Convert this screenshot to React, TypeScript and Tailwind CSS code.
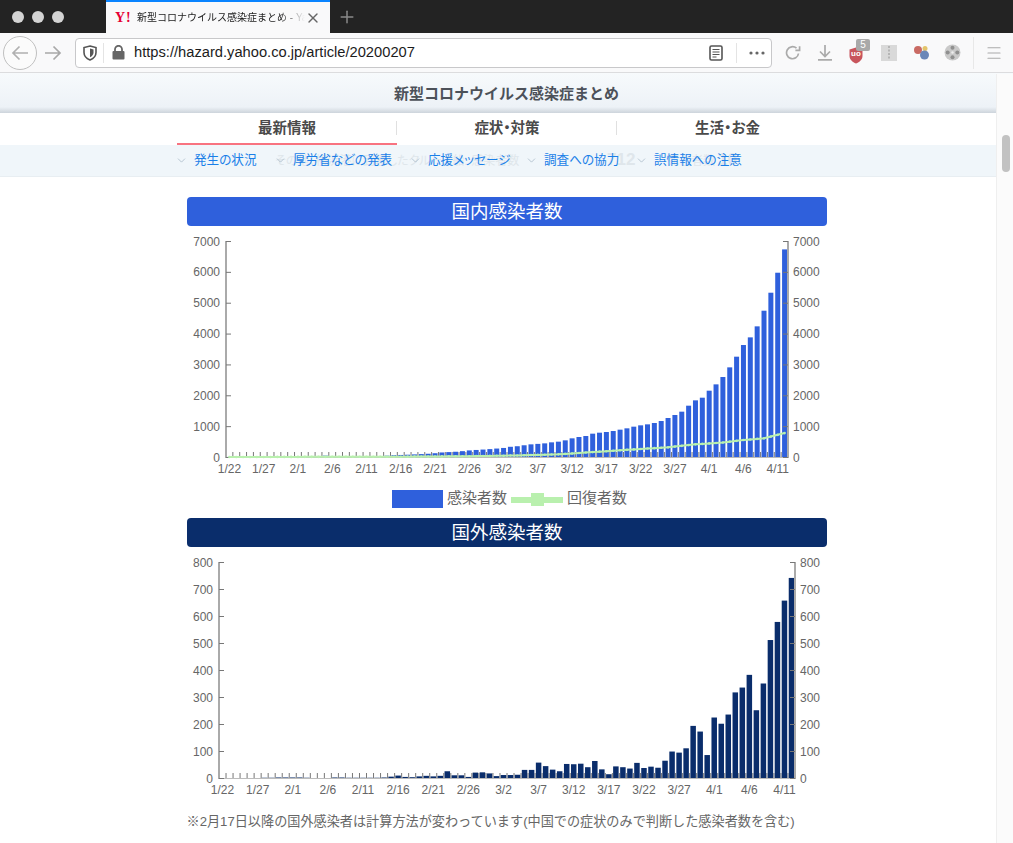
import { ChevronDown, Menu, Plus, X } from 'lucide-react';

const DOMESTIC = [
  2, 2, 2, 4, 4, 7, 7, 11, 15, 20, 20, 20, 22, 22, 45, 25, 25, 26, 26, 26, 28, 28, 29, 43, 59, 66, 74, 84, 94, 105,
  122, 147, 159, 170, 189, 214, 228, 241, 256, 274, 293, 331, 349, 380, 410, 425, 442, 475, 497, 540, 605, 648, 680,
  756, 788, 810, 842, 886, 929, 983, 1026, 1058, 1102, 1166, 1264, 1361, 1469, 1663, 1836, 1922, 2149, 2354, 2592,
  2905, 3251, 3629, 3877, 4234, 4741, 5324, 5972, 6728,
];

const OVERSEAS = [
  0, 0, 0, 0, 0, 0, 1, 1, 2, 2, 2, 2, 1, 0, 0, 0, 2, 2, 1, 1, 1, 1, 1, 2, 5, 9, 4, 3, 6, 8, 6, 8, 25, 10, 10, 4, 20,
  21, 17, 7, 11, 11, 12, 30, 30, 57, 44, 31, 25, 52, 51, 53, 40, 63, 32, 14, 43, 40, 35, 56, 37, 42, 38, 64, 98, 94,
  110, 193, 172, 85, 224, 201, 235, 317, 335, 382, 251, 350, 511, 578, 657, 741,
];

const RECOVERED_ANCHORS: [number, number][] = [
  [0, 0],
  [25, 10],
  [35, 25],
  [42, 50],
  [48, 86],
  [54, 173],
  [60, 260],
  [64, 313],
  [68, 410],
  [72, 470],
  [75, 550],
  [78, 605],
  [81, 775],
];

const DATE_LABELS = [
  '1/22', '1/27', '2/1', '2/6', '2/11', '2/16', '2/21', '2/26', '3/2', '3/7', '3/12', '3/17', '3/22', '3/27', '4/1', '4/6', '4/11',
];

function recoveredAt(i: number) {
  for (let k = 1; k < RECOVERED_ANCHORS.length; k++) {
    const [x0, y0] = RECOVERED_ANCHORS[k - 1];
    const [x1, y1] = RECOVERED_ANCHORS[k];
    if (i <= x1) return y0 + ((y1 - y0) * (i - x0)) / (x1 - x0);
  }
  return 0;
}

type ChartProps = {
  values: number[];
  max: number;
  step: number;
  left: number;
  right: number;
  barWidth: number;
  color: string;
  height: number;
  showRecovered?: boolean;
};

function BarChart({ values, max, step, left, right, barWidth, color, height, showRecovered }: ChartProps) {
  const top = 15;
  const zero = 231;
  const slot = (right - left) / values.length;
  const y = (v: number) => zero - (v / max) * (zero - top);
  const ticks = Array.from({ length: max / step + 1 }, (_, i) => i * step);
  const line = values.map((_, i) => `${left + slot * (i + 0.5)},${y(recoveredAt(i))}`).join(' ');

  return (
    <svg width="640" height={height} className="block font-['Liberation_Sans',sans-serif]">
      {values.map((_, i) => (
        <line key={i} x1={left + slot * i} x2={left + slot * i} y1={zero - 5} y2={zero} stroke="#777" />
      ))}
      {values.map((v, i) => (
        <rect
          key={i}
          x={left + slot * (i + 0.5) - barWidth / 2}
          y={y(v)}
          width={barWidth}
          height={zero - y(v)}
          fill={color}
        />
      ))}
      <line x1={left} x2={left} y1={top} y2={zero + 1} stroke="#aaa" strokeWidth="2" />
      <line x1={right} x2={right} y1={top} y2={zero + 1} stroke="#aaa" strokeWidth="2" />
      <line x1={left} x2={right} y1={zero + 0.5} y2={zero + 0.5} stroke="#bbb" />
      {ticks.map((t) => (
        <g key={t}>
          <line x1={left} x2={left + 5} y1={y(t) + 0.5} y2={y(t) + 0.5} stroke="#777" />
          <line x1={right - 5} x2={right} y1={y(t) + 0.5} y2={y(t) + 0.5} stroke="#777" />
          <text x={left - 6} y={y(t) + 4.5} textAnchor="end" fontSize="12" fill="#666">
            {t}
          </text>
          <text x={right + 5} y={y(t) + 4.5} fontSize="12" fill="#666">
            {t}
          </text>
        </g>
      ))}
      {DATE_LABELS.map((label, i) => (
        <text key={label} x={left + slot * (i * 5 + 0.5)} y={zero + 16} textAnchor="middle" fontSize="12" fill="#666">
          {label}
        </text>
      ))}
      {showRecovered && (
        <>
          <polyline points={line} fill="none" stroke="#b9f0ae" strokeWidth="2" />
          {values.map((_, i) => (
            <circle key={i} cx={left + slot * (i + 0.5)} cy={y(recoveredAt(i))} r="1.3" fill="#b9f0ae" />
          ))}
        </>
      )}
    </svg>
  );
}

function SectionTitle({ color, children }: { color: string; children: string }) {
  return (
    <h2 className={`h-[29px] rounded-[4px] pl-[1px] text-center text-[18.5px] leading-[29px] text-white ${color}`}>
      {children}
    </h2>
  );
}

function Legend() {
  return (
    <div className="flex h-[38px] items-start justify-center gap-1 pt-[9px] pl-[6px] text-[15px] leading-[18px] text-[#666]">
      <div className="mt-[1px] h-[18px] w-[51px] bg-[#2f60dc]" />
      <span>感染者数</span>
      <div className="mt-[4px] flex h-[13px] w-[52px] items-center justify-center bg-[linear-gradient(#b9f0ae,#b9f0ae)] bg-[length:100%_6px] bg-center bg-no-repeat">
        <div className="h-[13px] w-[13px] bg-[#b9f0ae]" />
      </div>
      <span>回復者数</span>
    </div>
  );
}

function ShieldIcon() {
  return (
    <svg width="14" height="16" viewBox="0 0 14 16" fill="none">
      <path d="M7 1 L13 2.6 V7.5 C13 11 10.5 13.5 7 15 C3.5 13.5 1 11 1 7.5 V2.6 Z" stroke="#555" strokeWidth="1.6" />
      <path d="M7 3.5 L10.5 4.5 V7.5 C10.5 9.7 9 11.2 7 12.3 Z" fill="#555" />
    </svg>
  );
}

function LockIcon() {
  return (
    <svg width="13" height="15" viewBox="0 0 13 15">
      <path d="M3 6 V4.3 A3.5 3.5 0 0 1 10 4.3 V6" fill="none" stroke="#666" strokeWidth="1.8" />
      <rect x="0.5" y="6" width="12" height="8.5" rx="1" fill="#666" />
    </svg>
  );
}

function ReaderIcon() {
  return (
    <svg width="14" height="16" viewBox="0 0 14 16" fill="none">
      <rect x="1" y="1" width="12" height="14" rx="1.5" stroke="#555" strokeWidth="1.6" />
      <path d="M3.5 4.5 H10.5 M3.5 7 H10.5 M3.5 9.5 H10.5 M3.5 12 H7.5" stroke="#555" strokeWidth="1.1" />
    </svg>
  );
}

function DotsIcon() {
  return (
    <svg width="16" height="4" viewBox="0 0 16 4" fill="#666">
      <circle cx="2" cy="2" r="1.6" />
      <circle cx="8" cy="2" r="1.6" />
      <circle cx="14" cy="2" r="1.6" />
    </svg>
  );
}

function ReloadIcon() {
  return (
    <svg width="16" height="16" viewBox="0 0 16 16" fill="none" stroke="#aaa" strokeWidth="1.7">
      <path d="M13.5 8.5 A6 6 0 1 1 11.5 3.2" />
      <path d="M14.6 1.2 V5.4 H10.4" />
    </svg>
  );
}

function DownloadIcon() {
  return (
    <svg width="16" height="17" viewBox="0 0 16 17" fill="none" stroke="#aaa" strokeWidth="1.7">
      <path d="M8 1 V12 M3 7.5 L8 12.5 L13 7.5 M1 15.8 H15" />
    </svg>
  );
}

function UblockIcon() {
  return (
    <div className="relative h-[18px] w-[16px]">
      <svg width="14" height="17" viewBox="0 0 14 17" className="mt-[3px]">
        <path d="M7 0.5 L13.5 2.5 V9 C13.5 12.5 10.5 15 7 16.5 C3.5 15 0.5 12.5 0.5 9 V2.5 Z" fill="#c8555c" />
      </svg>
      <span className="absolute top-[5px] left-[2px] text-[8px] leading-[10px] font-bold text-white">uo</span>
      <span className="absolute top-[-5px] left-[7px] h-[12px] w-[14px] rounded-[2px] bg-[#a9a9a9] text-center text-[10px] leading-[12px] text-white">
        5
      </span>
    </div>
  );
}

function ZipIcon() {
  return (
    <svg width="16" height="16" viewBox="0 0 16 16">
      <rect width="16" height="16" fill="#d9d9d9" />
      <path d="M8 1 V15" stroke="#b5b5b5" strokeWidth="2" strokeDasharray="2 1.5" />
    </svg>
  );
}

function BallsIcon() {
  return (
    <svg width="17" height="15" viewBox="0 0 17 15">
      <circle cx="12" cy="3.5" r="2.5" fill="#e3c46a" />
      <circle cx="5" cy="5" r="4" fill="#c96a63" />
      <circle cx="11.5" cy="10" r="4.5" fill="#6b87b8" />
    </svg>
  );
}

function ReelIcon() {
  return (
    <svg width="17" height="17" viewBox="0 0 17 17">
      <circle cx="8.5" cy="8.5" r="8" fill="#c9c9c9" />
      <circle cx="8.5" cy="3.7" r="2" fill="#8f8f8f" />
      <circle cx="8.5" cy="13.3" r="2" fill="#8f8f8f" />
      <circle cx="3.7" cy="8.5" r="2" fill="#8f8f8f" />
      <circle cx="13.3" cy="8.5" r="2" fill="#8f8f8f" />
      <circle cx="8.5" cy="8.5" r="1.2" fill="#eee" />
    </svg>
  );
}

function BrowserChrome() {
  return (
    <div className="font-['Liberation_Sans','Noto_Sans_CJK_JP',sans-serif]">
      <div className="flex h-[33px] bg-[#232323]">
        <div className="flex w-[106px] items-center gap-2 pl-3">
          <div className="h-3 w-3 rounded-full bg-[#d4d4d4]" />
          <div className="h-3 w-3 rounded-full bg-[#d4d4d4]" />
          <div className="h-3 w-3 rounded-full bg-[#d4d4d4]" />
        </div>
        <div className="flex w-[224px] items-center border-t-2 border-[#0a84ff] bg-[#f9f9fa] pl-[9px]">
          <span className="w-[22px] font-['Liberation_Serif',serif] text-[14px] leading-[16px] font-bold tracking-[1px] text-[#e60033]">
            Y!
          </span>
          <span className="w-[168px] overflow-hidden text-[10px] whitespace-nowrap text-[#222] [mask-image:linear-gradient(to_right,black_85%,transparent)]">
            新型コロナウイルス感染症まとめ - Yahoo!
          </span>
          <X size={16} strokeWidth={2} className="text-[#666]" />
        </div>
        <div className="flex w-[34px] items-center justify-center">
          <Plus size={20} strokeWidth={1.8} className="text-[#8a8a8a]" />
        </div>
      </div>
      <div className="flex h-[40px] items-center border-b border-[#dcdcde] bg-[#f9f9fa]">
        <div className="ml-[3px] flex h-[34px] w-[34px] items-center justify-center rounded-full border border-[#c0c0c0] bg-[#fbfbfb]">
          <svg width="18" height="16" viewBox="0 0 18 16" fill="none" stroke="#b0b0b0" strokeWidth="1.7">
            <path d="M17 8 H2 M8.5 1.5 L2 8 L8.5 14.5" />
          </svg>
        </div>
        <div className="ml-[7px] flex w-[31px] items-center">
          <svg width="18" height="16" viewBox="0 0 18 16" fill="none" stroke="#a8a8a8" strokeWidth="1.7">
            <path d="M1 8 H16 M9.5 1.5 L16 8 L9.5 14.5" />
          </svg>
        </div>
        <div className="flex h-[30px] w-[697px] items-center rounded-[4px] border border-[#c8c8ca] bg-white">
          <div className="flex w-[27px] justify-center">
            <ShieldIcon />
          </div>
          <div className="h-[20px] w-px bg-[#e4e4e4]" />
          <div className="ml-[8px] w-[22px]">
            <LockIcon />
          </div>
          <span className="w-[575px] text-[14.7px] text-[#1c1c1c]">https://hazard.yahoo.co.jp/article/20200207</span>
          <ReaderIcon />
          <div className="ml-[13px] h-[20px] w-px bg-[#e4e4e4]" />
          <div className="ml-[12px]">
            <DotsIcon />
          </div>
        </div>
        <div className="ml-[13px] flex items-center gap-[16px]">
          <ReloadIcon />
          <DownloadIcon />
          <UblockIcon />
          <ZipIcon />
          <BallsIcon />
          <div className="-ml-[2px]">
            <ReelIcon />
          </div>
        </div>
        <div className="ml-[12px] h-[32px] w-px bg-[#e8e8e8]" />
        <Menu size={18} strokeWidth={1.6} className="ml-[11px] text-[#aaa]" />
      </div>
    </div>
  );
}

function PageNav() {
  const subnav = [
    { label: '発生の状況', width: 'w-[99px]' },
    { label: '厚労省などの発表', width: 'w-[135px]' },
    { label: '応援メッセージ', width: 'w-[116px]' },
    { label: '調査への協力', width: 'w-[110px]' },
    { label: '誤情報への注意', width: 'w-[110px]' },
  ];
  return (
    <div>
      <div className="h-[40px] bg-[linear-gradient(#f7fafc,#edf2f7_85%,#cdd4db)] text-center text-[15px] leading-[42px] font-bold text-[#4c5159]">
        新型コロナウイルス感染症まとめ
      </div>
      <div className="flex h-[32px] justify-center bg-white">
        {['最新情報', '症状・対策', '生活・お金'].map((label, i) => (
          <div
            key={label}
            className={`h-[32px] w-[220px] pt-[8px] text-[14.5px] font-bold text-[#4a4a4a] [font-feature-settings:'palt'] ${i === 0 ? 'border-b-2 border-[#f87380]' : ''}`}
          >
            <div className={`pl-[2px] text-center leading-[14px] ${i < 2 ? 'border-r border-[#e0e0e0]' : ''}`}>{label}</div>
          </div>
        ))}
      </div>
      <div className="relative flex h-[32px] items-center border-b border-[#e8eef2] bg-[#f0f6fa] pl-[175px] text-[12.6px] text-[#1a7fe8] [font-feature-settings:'palt']">
        <div className="absolute top-[2px] left-[275px] flex items-baseline text-[12px] whitespace-nowrap text-[#dfe6eb]">
          <span className="w-[332px]">その他、横浜港に到着したクルーズ船: 感染者数</span>
          <span className="w-[60px] text-[17px] font-bold">712</span>
          <span className="w-[51px]">死亡者数</span>
          <span className="text-[17px] font-bold">10</span>
        </div>
        {subnav.map((item) => (
          <div key={item.label} className={`relative flex items-center gap-[6px] ${item.width}`}>
            <ChevronDown size={13} strokeWidth={1.3} className="text-[#9fb2c2]" />
            <span className="whitespace-nowrap">{item.label}</span>
          </div>
        ))}
      </div>
    </div>
  );
}

export default function App() {
  return (
    <div className="relative h-[843px] w-[1013px] overflow-hidden bg-white font-['Liberation_Sans','Noto_Sans_CJK_JP',sans-serif]">
      <BrowserChrome />
      <PageNav />
      <main className="mx-auto mt-[20px] w-[640px]">
        <SectionTitle color="bg-[#2f60dc]">国内感染者数</SectionTitle>
        <BarChart values={DOMESTIC} max={7000} step={1000} left={39} right={601} barWidth={5} color="#2f60dc" height={254} showRecovered />
        <Legend />
        <SectionTitle color="bg-[#0a2d6b]">国外感染者数</SectionTitle>
        <BarChart values={OVERSEAS} max={800} step={100} left={32} right={608} barWidth={5.5} color="#0a2d6b" height={258} />
        <p className="mt-[7px] text-[13.15px] text-[#666]">
          ※2月17日以降の国外感染者は計算方法が変わっています(中国での症状のみで判断した感染者数を含む)
        </p>
      </main>
      <div className="absolute top-[74px] right-0 bottom-0 w-[17px] border-l border-[#efefef] bg-[#fbfbfb]">
        <div className="mt-[61px] ml-[5px] h-[37px] w-[8px] rounded-full bg-[#c2c2c2]" />
      </div>
    </div>
  );
}
